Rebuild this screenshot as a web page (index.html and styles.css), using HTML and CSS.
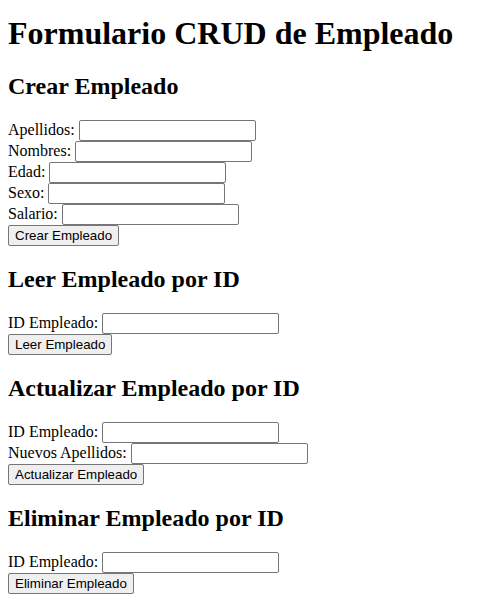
FILE: index.html
```html
<!DOCTYPE html>
<html lang="es">
<head>
<meta charset="utf-8">
<title>Formulario CRUD de Empleado</title>
<link rel="stylesheet" href="styles.css">
</head>
<body>
<h1 class="title">Formulario CRUD de Empleado</h1>

<h2 class="section">Crear Empleado</h2>
<form class="form">
<label class="label">Apellidos:</label> <input class="field" type="text"><br>
<label class="label">Nombres:</label> <input class="field" type="text"><br>
<label class="label">Edad:</label> <input class="field" type="text"><br>
<label class="label">Sexo:</label> <input class="field" type="text"><br>
<label class="label">Salario:</label> <input class="field" type="text"><br>
<button class="btn" type="button">Crear Empleado</button>
</form>

<h2 class="section">Leer Empleado por ID</h2>
<form class="form">
<label class="label">ID Empleado:</label> <input class="field" type="text"><br>
<button class="btn" type="button">Leer Empleado</button>
</form>

<h2 class="section">Actualizar Empleado por ID</h2>
<form class="form">
<label class="label">ID Empleado:</label> <input class="field" type="text"><br>
<label class="label">Nuevos Apellidos:</label> <input class="field" type="text"><br>
<button class="btn" type="button">Actualizar Empleado</button>
</form>

<h2 class="section">Eliminar Empleado por ID</h2>
<form class="form">
<label class="label">ID Empleado:</label> <input class="field" type="text"><br>
<button class="btn" type="button">Eliminar Empleado</button>
</form>
</body>
</html>
```
FILE: styles.css
```css
html, body {
  background: #ffffff;
  color: #000000;
}
body {
  margin: 0 8px 8px 8px;
  font-family: "Liberation Serif", "Times New Roman", serif;
  font-size: 16px;
}
.title {
  font-size: 32px;
  font-weight: bold;
  margin: 15px 0 21.44px 0;
}
.section {
  font-size: 24px;
  font-weight: bold;
  margin: 19.92px 0;
}
.form {
  margin: 0;
}
.field {
  box-sizing: border-box;
  width: 177px;
  height: 21px;
  padding: 1px 2px;
  border: 1px solid #767676;
  border-radius: 2px;
  font-family: "Liberation Sans", Arial, sans-serif;
  font-size: 13.333px;
  vertical-align: baseline;
  background: #ffffff;
}
.btn {
  font-family: "Liberation Sans", Arial, sans-serif;
  font-size: 13.333px;
  padding: 2px 6px;
  border: 1px solid #767676;
  border-radius: 2px;
  background: #efefef;
  color: #000000;
}
```
